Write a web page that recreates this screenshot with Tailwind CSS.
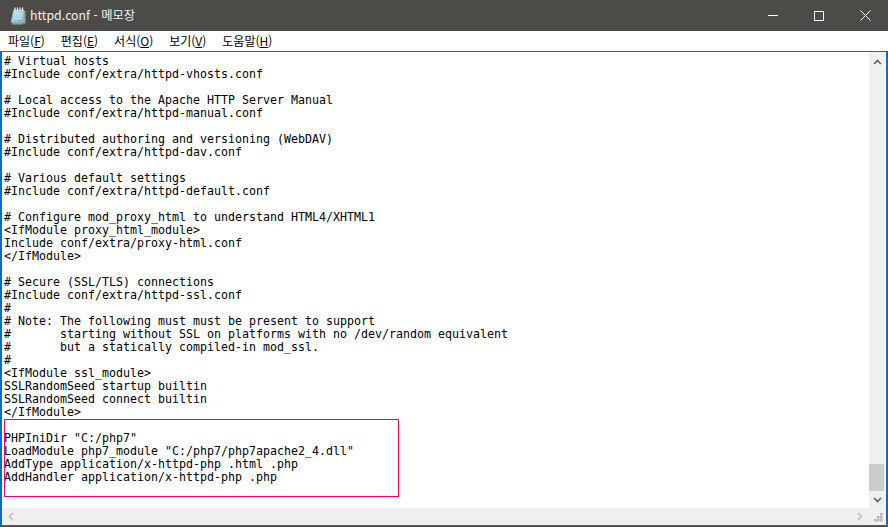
<!DOCTYPE html>
<html lang="ko">
<head>
  <meta charset="UTF-8" />
  <title>httpd.conf - 메모장</title>
  <script src="https://cdn.jsdelivr.net/npm/@tailwindcss/browser@4"></script>
</head>
<body class="w-[888px] h-[527px] overflow-hidden bg-white">
  <div class="flex flex-col h-[527px] font-['Noto_Sans_CJK_KR',sans-serif]">
    <!-- Title bar -->
    <header class="flex items-center h-[31px] bg-[#4d4b48] text-[#f2f2f2] shrink-0">
      <svg class="ml-[10px] mr-1 w-4 h-[18px]" viewBox="0 0 16 18">
        <defs>
          <linearGradient id="page" x1="0" y1="0" x2="1" y2="1">
            <stop offset="0" stop-color="#c6ebf4" />
            <stop offset="1" stop-color="#6fb6d2" />
          </linearGradient>
        </defs>
        <path d="M5 4h10.500v12.500H13l-.5 1H2z" fill="#a89f7c" />
        <path d="M3.500 3h10.500v12.500H1z" fill="url(#page)" stroke="#7fa9bd" stroke-width=".6" />
        <path d="M5 6.500h7M4.500 9h7.500M4 11.500h8" stroke="#d7f0f6" stroke-width=".8" />
        <path d="M5 .5v3.500M7.500 .5v3.500M10 .5v3.500M12.500 .5v3.500" stroke="#f1f3f4" stroke-width="1.200" />
      </svg>
      <span class="text-[12.3px]">httpd.conf - 메모장</span>
      <div class="ml-auto flex items-center">
        <button class="w-[46px] h-[31px] flex items-center justify-center">
          <span class="block w-[10px] h-px bg-white"></span>
        </button>
        <button class="w-[46px] h-[31px] flex items-center justify-center">
          <span class="block w-[10px] h-[10px] border border-white"></span>
        </button>
        <button class="w-[46px] h-[31px] flex items-center justify-center">
          <svg class="w-[11px] h-[11px]" viewBox="0 0 11 11"><path d="M.5.500l10 10M10.500.500l-10 10" stroke="#fff" /></svg>
        </button>
      </div>
    </header>

    <!-- Menu -->
    <nav class="flex items-center gap-4 h-5 pl-[8px] bg-white text-[12px] text-black shrink-0">
      <span>파일(<u>F</u>)</span>
      <span>편집(<u>E</u>)</span>
      <span>서식(<u>O</u>)</span>
      <span>보기(<u>V</u>)</span>
      <span>도움말(<u>H</u>)</span>
    </nav>

    <!-- Editor -->
    <main class="relative h-[475px] shrink-0 border-t border-b border-x-2 border-[#0f6cbd] grid grid-cols-[1fr_17px] grid-rows-[456px_17px]">
      <pre class="pl-[2px] pt-[3px] overflow-hidden text-[11.63px] leading-[13px] text-black font-['DejaVu_Sans_Mono',monospace]"># Virtual hosts
#Include conf/extra/httpd-vhosts.conf

# Local access to the Apache HTTP Server Manual
#Include conf/extra/httpd-manual.conf

# Distributed authoring and versioning (WebDAV)
#Include conf/extra/httpd-dav.conf

# Various default settings
#Include conf/extra/httpd-default.conf

# Configure mod_proxy_html to understand HTML4/XHTML1
&lt;IfModule proxy_html_module&gt;
Include conf/extra/proxy-html.conf
&lt;/IfModule&gt;

# Secure (SSL/TLS) connections
#Include conf/extra/httpd-ssl.conf
#
# Note: The following must must be present to support
#       starting without SSL on platforms with no /dev/random equivalent
#       but a statically compiled-in mod_ssl.
#
&lt;IfModule ssl_module&gt;
SSLRandomSeed startup builtin
SSLRandomSeed connect builtin
&lt;/IfModule&gt;

PHPIniDir "C:/php7"
LoadModule php7_module "C:/php7/php7apache2_4.dll"
AddType application/x-httpd-php .html .php
AddHandler application/x-httpd-php .php</pre>

      <!-- Vertical scrollbar -->
      <div class="flex flex-col bg-[#f0f0f0] border-r border-white">
        <div class="h-[17px] pt-[2px] flex items-center justify-center">
          <svg class="w-[9px] h-[6px]" viewBox="0 0 9 6"><path d="M1 5l3.500-3.500L8 5" fill="none" stroke="#606060" stroke-width="1.600" /></svg>
        </div>
        <div class="flex-1 flex flex-col justify-end">
          <div class="h-[27px] w-[15px] bg-[#cdcdcd]"></div>
        </div>
        <div class="h-[17px] flex items-center justify-center">
          <svg class="w-[9px] h-[6px]" viewBox="0 0 9 6"><path d="M1 1l3.500 3.500L8 1" fill="none" stroke="#606060" stroke-width="1.600" /></svg>
        </div>
      </div>

      <!-- Horizontal scrollbar -->
      <div class="flex items-center justify-between pl-[6px] pr-[6px] bg-[#f0f0f0]">
        <svg class="w-[6px] h-[9px]" viewBox="0 0 6 9"><path d="M5 1L1.500 4.500 5 8" fill="none" stroke="#c0c0c0" stroke-width="1.600" /></svg>
        <svg class="w-[6px] h-[9px]" viewBox="0 0 6 9"><path d="M1 1l3.500 3.500L1 8" fill="none" stroke="#c0c0c0" stroke-width="1.600" /></svg>
      </div>
      <div class="relative bg-[#f0f0f0]">
        <svg class="absolute right-[3px] bottom-[3px] w-[9px] h-[9px]" viewBox="0 0 9 9" fill="#b4b4b4">
          <rect x="6" y="0" width="2.500" height="2.500" /><rect x="3" y="3" width="2.500" height="2.500" /><rect x="6" y="3" width="2.500" height="2.500" />
          <rect x="0" y="6" width="2.500" height="2.500" /><rect x="3" y="6" width="2.500" height="2.500" /><rect x="6" y="6" width="2.500" height="2.500" />
        </svg>
      </div>

      <!-- Pink annotation box -->
      <div class="absolute left-[2px] top-[367px] w-[395px] h-[78px] border border-[#f0056e]"></div>
    </main>
    <div class="h-px bg-[#4d4b48] shrink-0"></div>
  </div>
</body>
</html>
